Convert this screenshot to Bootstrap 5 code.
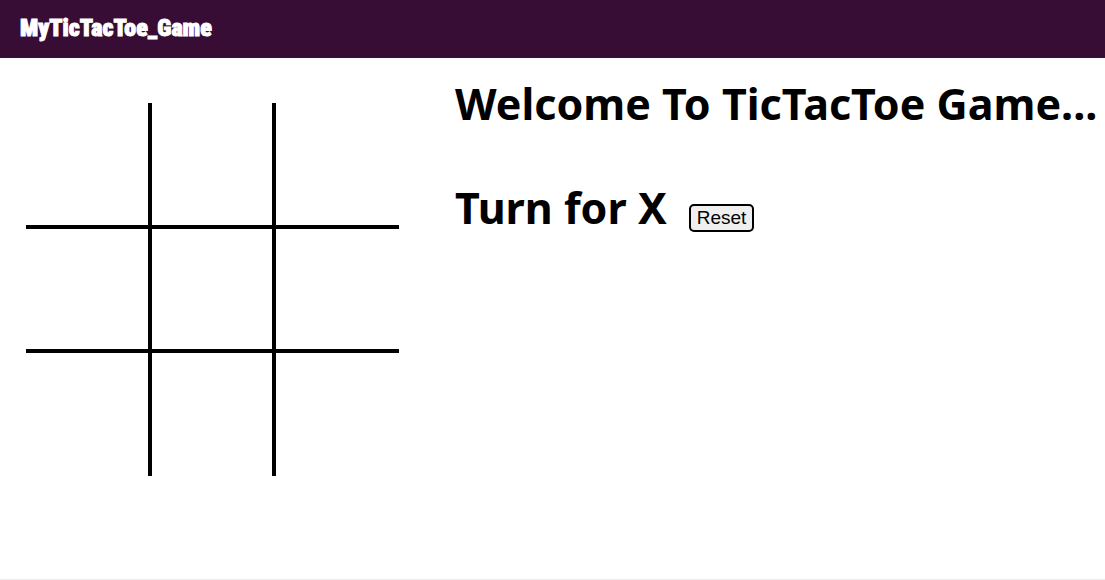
<!DOCTYPE html>
<html lang="en">
<head>
<meta charset="utf-8">
<meta name="viewport" content="width=device-width, initial-scale=1">
<title>MyTicTacToe_Game</title>
<link href="https://cdn.jsdelivr.net/npm/bootstrap@5.3.0/dist/css/bootstrap.min.css" rel="stylesheet">
<style>
  body { font-family: "Noto Sans", "Open Sans", sans-serif; color: #000; --bs-border-color: #eee; }
  .game-bar { background: #370d35; min-height: 58px; padding: 0 20px 2px; }
  .game-bar .navbar-brand { font: 900 24px/36px Impact, "Roboto Condensed", Roboto, sans-serif; -webkit-text-stroke: 1px #fff; }
  .game-area { padding: 16px 0 24px 26px; gap: 56px; }
  .board { display: grid; grid-template-columns: 126px 124px 123px; grid-template-rows: 126px 124px 123px; margin-top: 29px; }
  .cell { border: 0 solid #000; background: none; padding: 0; font-size: 64px; }
  .cell:not(:nth-child(3n)) { border-right-width: 4px; }
  .cell:nth-child(-n+6) { border-bottom-width: 4px; }
  .headline { font-size: 43px; line-height: 60px; font-weight: 700; }
  .turn-row { margin-top: 44px; gap: 22px; }
  .reset-btn { font: 19px/22px "Liberation Sans", Arial, sans-serif; color: #000; background: #efefef; border: 2px solid #000; border-radius: 5px; padding: 1px 6px; }
</style>
</head>
<body class="d-flex flex-column min-vh-100 border-bottom">
<nav class="navbar game-bar">
  <a class="navbar-brand text-white m-0 p-0" href="#">MyTicTacToe_Game</a>
</nav>
<main class="game-area d-flex flex-wrap flex-md-nowrap flex-grow-1 align-items-start">
  <div class="board flex-shrink-0" role="group" aria-label="Board">
    <button type="button" class="cell" aria-label="Cell 1"></button>
    <button type="button" class="cell" aria-label="Cell 2"></button>
    <button type="button" class="cell" aria-label="Cell 3"></button>
    <button type="button" class="cell" aria-label="Cell 4"></button>
    <button type="button" class="cell" aria-label="Cell 5"></button>
    <button type="button" class="cell" aria-label="Cell 6"></button>
    <button type="button" class="cell" aria-label="Cell 7"></button>
    <button type="button" class="cell" aria-label="Cell 8"></button>
    <button type="button" class="cell" aria-label="Cell 9"></button>
  </div>
  <section>
    <h1 class="headline m-0">Welcome To TicTacToe Game...</h1>
    <div class="turn-row d-flex align-items-baseline">
      <span class="headline">Turn for X</span>
      <button type="button" class="reset-btn">Reset</button>
    </div>
  </section>
</main>
</body>
</html>
